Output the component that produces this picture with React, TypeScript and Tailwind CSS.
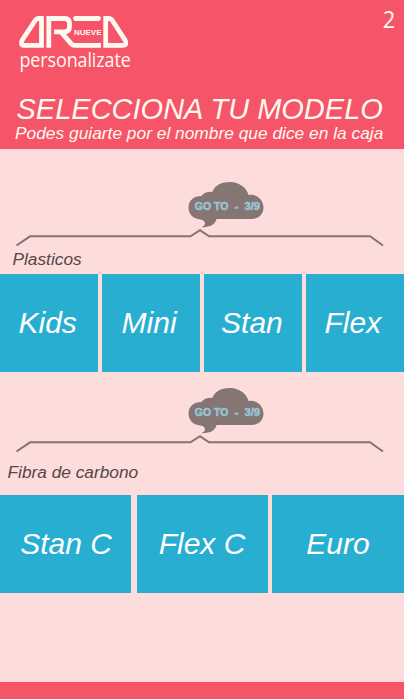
const arial = "font-['Liberation_Sans',Arial,sans-serif]";

function Logo() {
  return (
    <svg className="block h-[34px] w-[112px]" viewBox="0 0 112 34" fill="none" stroke="#fffaf0" strokeWidth="4.8">
      <path d="M23.5 32.8V3.5H20.5Q18.5 3.5 17.5 5L4.3 25Q1.5 30.3 6.5 30.3H23.5" />
      <path d="M30.8 32.8V3.5H46.5Q51.5 3.5 51.5 8.5V11.5Q51.5 16.8 46.5 16.8H36" />
      <path d="M43 17L53 28.6Q54.5 30.3 57 30.3H83" />
      <path d="M57.5 3.5H80.5" strokeLinecap="round" />
      <path d="M87.7 30.3V3.5H91Q93 3.5 94 5L107 25Q109.8 30.3 104.5 30.3H87.7Z" />
      <text x="56" y="19.6" fill="#fffaf0" stroke="none" fontSize="8" fontWeight="700" fontFamily="Liberation Sans, Arial, sans-serif" textLength="27.5" lengthAdjust="spacingAndGlyphs">NUEVE</text>
    </svg>
  );
}

function Divider() {
  return (
    <svg className="block h-[68px] w-full" viewBox="0 0 404 68" fill="none">
      <path d="M16.5 65.5L30 56.3H190.5L200 50.2L209 56.3H370L383 65.5" stroke="#857271" strokeWidth="2" />
      <path d="M200.5 39.5C193 39 188.5 34 188.5 27.5C188.5 20.5 194 15.8 201.5 16Q204 11.5 212.5 11.7C215 5 222 2 230 2C239 2 246.5 7.5 248.5 15C257 13.5 263.5 20 263.5 27.5C263.5 34.5 258 39 252 39H216.5C215.5 44 210.5 47.5 201.5 47.2C206.5 45 206 40.5 200.5 39.5Z" fill="#857674" />
      <g fill="#98c5d6" stroke="#98c5d6" strokeWidth=".5" fontSize="10.4" fontWeight="700" fontFamily="Liberation Sans, Arial, sans-serif">
        <text x="194.8" y="30" textLength="33.5" lengthAdjust="spacingAndGlyphs">GO TO</text>
        <text x="234.5" y="30" textLength="4" lengthAdjust="spacingAndGlyphs">-</text>
        <text x="244.5" y="30" textLength="15.5" lengthAdjust="spacingAndGlyphs">3/9</text>
      </g>
    </svg>
  );
}

function Tile({ name, className = "" }: { name: string; className?: string }) {
  return (
    <button className={`flex h-[98px] items-center justify-center bg-[#28aed0] pb-px text-[30px] leading-none whitespace-nowrap text-white italic ${className}`}>
      {name}
    </button>
  );
}

export default function App() {
  return (
    <main className={`flex h-[699px] w-[404px] flex-col overflow-hidden bg-[#fddddb] ${arial}`}>
      <header className="h-[149px] shrink-0 bg-[#f65468] text-[#fffaf0]">
        <div className="flex h-[93px] justify-between pt-[15px] pr-[9px] pl-[18px]">
          <div>
            <Logo />
            <p className="mt-[-2px] origin-left scale-x-[.92] pl-[1.5px] font-['Open_Sans',sans-serif] text-[19.5px] leading-[25px] tracking-[-.1px]">personalizate</p>
          </div>
          <span className="mt-[-8px] origin-right scale-x-95 font-['Open_Sans',sans-serif] text-[23px] leading-6">2</span>
        </div>
        <h1 className="pl-[16.5px] text-[29px] leading-[32px] whitespace-nowrap italic">SELECCIONA TU MODELO</h1>
        <p className="pl-[15px] text-[17.35px] leading-[17px] whitespace-nowrap italic">Podes guiarte por el nombre que dice en la caja</p>
      </header>

      <section className="pt-[31px]">
        <Divider />
        <h2 className="h-[26px] pt-[1px] pl-[12.5px] text-[17.3px] leading-5 text-[#574548] italic">Plasticos</h2>
        <div className="grid grid-cols-4 gap-[3.5px]">
          <Tile name="Kids" className="pr-[3px]" />
          <Tile name="Mini" className="pr-[4px]" />
          <Tile name="Stan" className="pr-[2px]" />
          <Tile name="Flex" className="pr-[4px]" />
        </div>
      </section>

      <section className="pt-[14px]">
        <Divider />
        <h2 className="h-[41px] pt-[8px] pl-[7.5px] text-[17.3px] leading-5 text-[#574548] italic">Fibra de carbono</h2>
        <div className="grid grid-cols-[133px_131px_132px] gap-1">
          <Tile name="Stan C" className="w-[131px] pl-[1px]" />
          <Tile name="Flex C" className="pr-[1px]" />
          <Tile name="Euro" />
        </div>
      </section>

      <footer className="mt-auto h-[17px] shrink-0 bg-[#f65468]" />
    </main>
  );
}
